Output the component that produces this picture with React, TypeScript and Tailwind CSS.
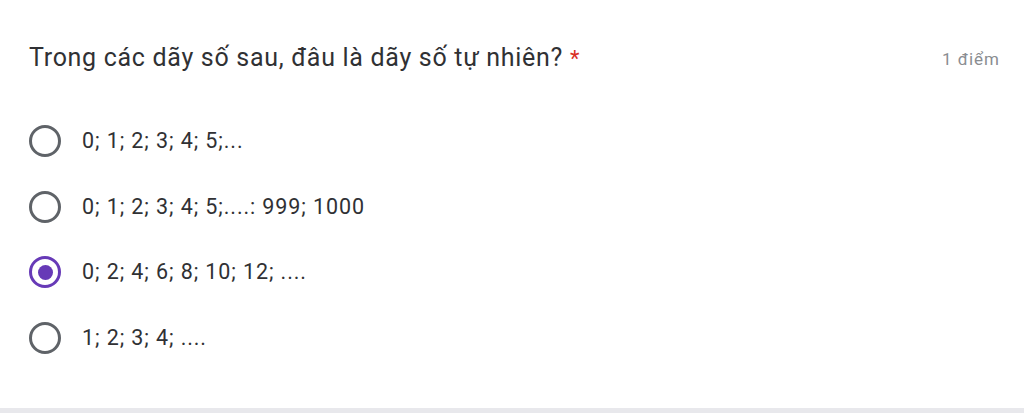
import React from "react";

const options = [
  "0; 1; 2; 3; 4; 5;...",
  "0; 1; 2; 3; 4; 5;....: 999; 1000",
  "0; 2; 4; 6; 8; 10; 12; ....",
  "1; 2; 3; 4; ....",
];

function Radio({ checked }: { checked: boolean }) {
  return (
    <div
      className={
        "w-[32px] h-[32px] rounded-full border-[3px] flex items-center justify-center shrink-0 " +
        (checked ? "border-[#673ab7]" : "border-[#5f6368]")
      }
    >
      {checked && <div className="w-[15px] h-[15px] rounded-full bg-[#673ab7]" />}
    </div>
  );
}

export default function App() {
  return (
    <div
      className="w-[1024px] h-[413px] bg-white flex flex-col overflow-hidden"
      style={{ fontFamily: "Roboto, 'Noto Sans', sans-serif" }}
    >
      <div className="flex-1 flex flex-col pl-[29px] pr-[24px]">
        <div className="flex items-start justify-between pt-[43px]">
          <div className="text-[25px] leading-[30px] tracking-[0.7px] text-[#303134]">
            Trong các dãy số sau, đâu là dãy số tự nhiên?{" "}
            <span className="text-[#d93025] text-[22px]">*</span>
          </div>
          <div className="text-[17px] leading-[30px] tracking-[1px] text-[#8a8d91] pt-[1px]">1 điểm</div>
        </div>
        <div className="flex flex-col mt-[51px] gap-[33.5px]">
          {options.map((o, i) => (
            <div key={i} className="flex items-center h-[32px]">
              <Radio checked={i === 2} />
              <span className="ml-[21px] text-[21.5px] tracking-[0.9px] text-[#303134] leading-[32px]">{o}</span>
            </div>
          ))}
        </div>
      </div>
      <div className="h-[5px] bg-[#e8e8ec]" />
    </div>
  );
}
